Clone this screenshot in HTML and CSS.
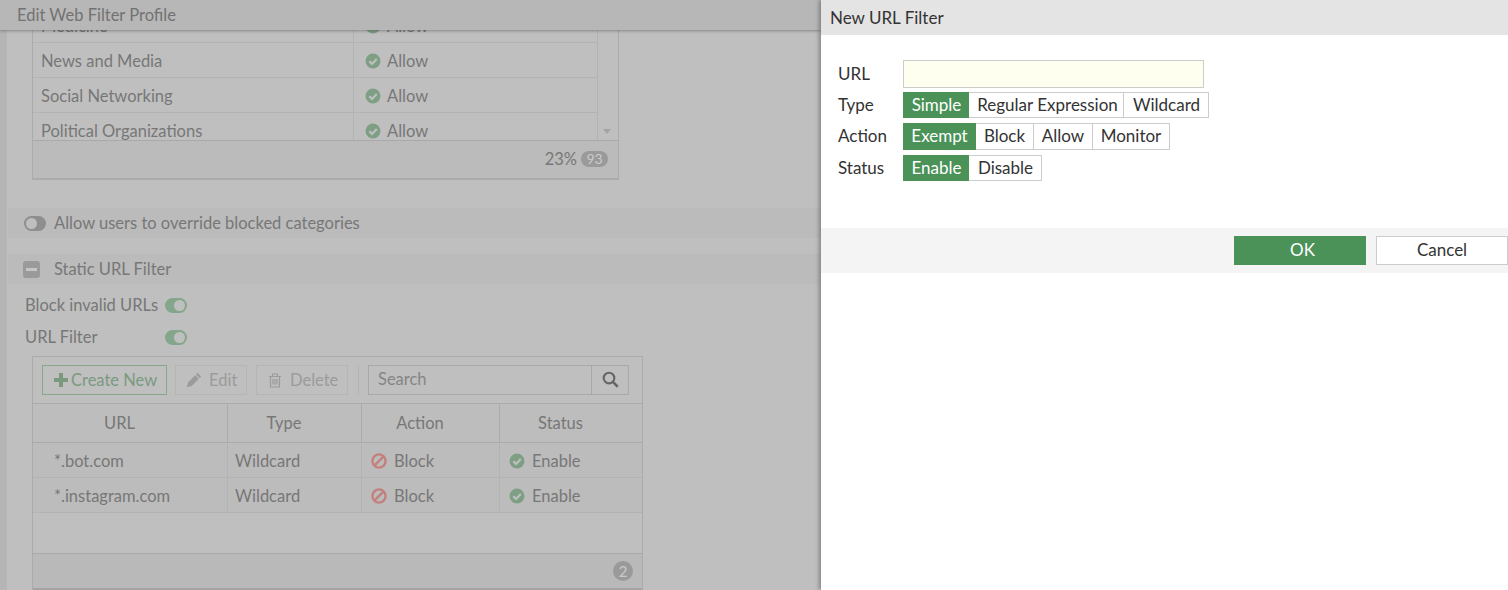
FILE: index.html
```html
<!DOCTYPE html>
<html lang="en">
<head>
<meta charset="utf-8">
<title>New URL Filter</title>
<link rel="stylesheet" href="styles.css">
</head>
<body>
<svg class="defs" width="0" height="0" aria-hidden="true">
  <symbol id="check" viewBox="0 0 16 16">
    <circle cx="8" cy="8" r="7.5" fill="currentColor"/>
    <path d="M4.3 8.2 7 10.9 11.8 6" fill="none" stroke="var(--tick)" stroke-width="2.2"/>
  </symbol>
  <symbol id="ban" viewBox="0 0 16 16">
    <circle cx="8" cy="8" r="6.6" fill="none" stroke="currentColor" stroke-width="2.4"/>
    <path d="M3.6 12.4 12.4 3.6" fill="none" stroke="currentColor" stroke-width="2.4"/>
  </symbol>
</svg>
<div class="screen">
  <section class="page">
    <header class="page-head">Edit Web Filter Profile</header>
    <div class="page-body">
      <div class="grid-one">
        <div class="grid-one-scroll">
          <div class="grid-one-rows">
            <div class="cat-row"><span class="cat-name">Medicine</span><span class="cat-action"><svg class="ico"><use href="#check"/></svg>Allow</span></div>
            <div class="cat-row"><span class="cat-name">News and Media</span><span class="cat-action"><svg class="ico"><use href="#check"/></svg>Allow</span></div>
            <div class="cat-row"><span class="cat-name">Social Networking</span><span class="cat-action"><svg class="ico"><use href="#check"/></svg>Allow</span></div>
            <div class="cat-row"><span class="cat-name">Political Organizations</span><span class="cat-action"><svg class="ico"><use href="#check"/></svg>Allow</span></div>
          </div>
          <div class="scroll-track"><span class="scroll-arrow"></span></div>
        </div>
        <div class="grid-one-foot">23%<span class="pill">93</span></div>
      </div>

      <div class="bar bar-first"><span class="toggle toggle-off"></span><span>Allow users to override blocked categories</span></div>
      <div class="bar bar-second"><span class="minus"></span><span>Static URL Filter</span></div>

      <div class="opt opt-first"><span class="opt-label">Block invalid URLs</span><span class="toggle toggle-on"></span></div>
      <div class="opt"><span class="opt-label">URL Filter</span><span class="toggle toggle-on"></span></div>

      <div class="grid-two">
        <div class="tools">
          <span class="tool tool-create">
            <svg class="tool-plus" viewBox="0 0 14 14"><path d="M5 0h4v5h5v4H9v5H5V9H0V5h5z" fill="currentColor"/></svg>Create New
          </span>
          <span class="tool tool-edit">
            <svg class="tool-ico" viewBox="0 0 16 16"><path d="M11.6.8 15.2 4.4 13.6 6 10 2.4zM9.2 3.2 12.8 6.8 5.6 14 .8 15.2 2 10.4z" fill="currentColor"/></svg>Edit
          </span>
          <span class="tool tool-del">
            <svg class="tool-ico" viewBox="0 0 16 16"><path d="M2 4.5h12M5.5 4.5V2h5v2.5M3.5 4.5V15h9V4.5M6 7v5.5M8 7v5.5M10 7v5.5" fill="none" stroke="currentColor" stroke-width="1.2"/></svg>Delete
          </span>
          <span class="tool-sep"></span>
          <span class="search">
            <span class="search-text">Search</span>
            <span class="search-btn"><svg class="search-ico" viewBox="0 0 16 16"><circle cx="6.6" cy="6.6" r="5" fill="none" stroke="currentColor" stroke-width="2"/><path d="M10.3 10.3 14.8 14.8" stroke="currentColor" stroke-width="2.4"/></svg></span>
          </span>
        </div>
        <div class="url-head">
          <span class="url-cell">URL</span><span class="url-cell">Type</span><span class="url-cell">Action</span><span class="url-cell">Status</span>
        </div>
        <div class="url-row">
          <span class="url-td url-name">*.bot.com</span><span class="url-td">Wildcard</span>
          <span class="url-td"><svg class="ico ico-ban"><use href="#ban"/></svg>Block</span>
          <span class="url-td"><svg class="ico"><use href="#check"/></svg>Enable</span>
        </div>
        <div class="url-row">
          <span class="url-td url-name">*.instagram.com</span><span class="url-td">Wildcard</span>
          <span class="url-td"><svg class="ico ico-ban"><use href="#ban"/></svg>Block</span>
          <span class="url-td"><svg class="ico"><use href="#check"/></svg>Enable</span>
        </div>
        <div class="url-empty"></div>
        <div class="url-foot"><span class="pill pill-round">2</span></div>
      </div>
    </div>
  </section>

  <aside class="panel">
    <header class="panel-head">New URL Filter</header>
    <div class="form">
      <div class="field field-url"><span class="field-label">URL</span><span class="url-input"></span></div>
      <div class="field field-type"><span class="field-label">Type</span>
        <span class="seg"><span class="seg-item seg-on seg-simple">Simple</span><span class="seg-item seg-regex">Regular Expression</span><span class="seg-item seg-wild">Wildcard</span></span></div>
      <div class="field field-action"><span class="field-label">Action</span>
        <span class="seg"><span class="seg-item seg-on seg-exempt">Exempt</span><span class="seg-item seg-block">Block</span><span class="seg-item seg-allow">Allow</span><span class="seg-item seg-monitor">Monitor</span></span></div>
      <div class="field field-status"><span class="field-label">Status</span>
        <span class="seg"><span class="seg-item seg-on seg-simple">Enable</span><span class="seg-item seg-disable">Disable</span></span></div>
    </div>
    <footer class="panel-foot">
      <span class="btn btn-ok">OK</span><span class="btn btn-cancel">Cancel</span>
    </footer>
  </aside>
</div>
</body>
</html>
```

FILE: styles.css
```css
* { box-sizing: border-box; }
html, body { margin: 0; height: 100%; overflow: hidden; }
body {
  font-family: Lato, "Open Sans", sans-serif;
  font-size: 17px;
  color: #333;
  background: #fff;
  --tick: #bfbfbf;
}
.defs { position: absolute; }
.screen { display: flex; width: 1508px; height: 590px; }

/* dimmed page */
.page {
  width: 821px;
  height: 590px;
  flex: none;
  display: flex;
  flex-direction: column;
  overflow: hidden;
  background: #bfbfbf;
  color: #777;
  font-size: 16.5px;
}
.page-head {
  position: relative;
  z-index: 2;
  flex: none;
  height: 30px;
  padding-left: 17px;
  line-height: 30px;
  background: #b7b7b7;
  color: #727272;
  box-shadow: 0 1px 3px rgba(0,0,0,.3);
}
.page-body {
  flex: 1;
  min-height: 0;
  border-left: 7px solid #b5b5b5;
  padding-left: 1px;
}

.ico { width: 16px; height: 16px; flex: none; margin-right: 7px; color: #7f9f85; }
.ico-ban { color: #c4807c; }

.grid-one {
  width: 587px;
  margin-left: 24px;
  border: 1px solid #ababab;
  border-top: 0;
  border-bottom-width: 2px;
}
.grid-one-scroll { display: flex; height: 110px; overflow: hidden; }
.grid-one-rows { width: 565px; margin-top: -22px; }
.cat-row {
  display: grid;
  grid-template-columns: 320px 1fr;
  height: 35px;
  align-items: center;
  border-bottom: 1px solid #b3b3b3;
  border-right: 1px solid #b3b3b3;
}
.cat-name { display: flex; align-items: center; padding: 1px 0 0 8px; height: 100%; }
.cat-action { display: flex; align-items: center; padding: 1px 0 0 11px; height: 100%; border-left: 1px solid #b3b3b3; }
.cat-action .ico { margin-right: 6px; }
.scroll-track { flex: 1; position: relative; }
.scroll-arrow {
  position: absolute;
  left: 5px;
  bottom: 6px;
  border: 4px solid transparent;
  border-top: 5px solid #a3a3a3;
  border-bottom: 0;
}
.grid-one-foot {
  height: 38px;
  display: flex;
  align-items: center;
  justify-content: flex-end;
  padding-right: 10px;
  padding-bottom: 1px;
  border-top: 1px solid #a9a9a9;
  background: #bbb;
}
.pill {
  min-width: 27px;
  height: 16px;
  margin-left: 4px;
  border-radius: 8px;
  background: #9a9a9a;
  color: #cacaca;
  font-size: 14px;
  line-height: 16px;
  text-align: center;
}
.pill-round { min-width: 20px; height: 20px; border-radius: 10px; line-height: 20px; margin: 0; font-size: 15px; }

.bar {
  display: flex;
  align-items: center;
  height: 30px;
  background: #bbb;
}
.bar-first { margin-top: 28px; padding-left: 16px; }
.bar-first .toggle { margin-right: 8px; }
.bar-second { margin-top: 16px; padding-left: 15px; }
.minus {
  position: relative;
  width: 17px;
  height: 17px;
  margin-right: 14px;
  border-radius: 3px;
  background: #9a9a9a;
}
.minus::after {
  content: "";
  position: absolute;
  left: 3px;
  right: 3px;
  top: 7px;
  height: 3px;
  background: #c6c6c6;
}
.toggle {
  position: relative;
  display: block;
  flex: none;
  width: 22px;
  height: 15px;
  border-radius: 8px;
}
.toggle::after {
  content: "";
  position: absolute;
  top: 2px;
  width: 11px;
  height: 11px;
  border-radius: 50%;
  background: #bfbfbf;
}
.toggle-on { background: #84a68a; }
.toggle-on::after { right: 2px; }
.toggle-off { background: #8e8e8e; }
.toggle-off::after { left: 2px; }

.opt { display: flex; align-items: center; height: 32px; padding-left: 17px; }
.opt-first { margin-top: 5px; }
.opt-label { width: 140px; }

.grid-two {
  width: 611px;
  margin-top: 3px;
  margin-left: 24px;
  border: 1px solid #ababab;
  border-bottom: 0;
}
.tools {
  display: flex;
  align-items: center;
  height: 47px;
  padding: 0 13px 1px 9px;
  border-bottom: 1px solid #ababab;
}
.tool {
  display: flex;
  align-items: center;
  height: 30px;
  border: 1px solid #b5b5b5;
  color: #9b9b9b;
}
.tool-create {
  width: 125px;
  padding-left: 11px;
  border-color: #85a78b;
  color: #7a9a80;
}
.tool-plus { width: 14px; height: 14px; margin-right: 3px; }
.tool-edit { width: 72px; margin-left: 8px; padding-left: 10px; }
.tool-del { width: 92px; margin-left: 9px; padding-left: 10px; }
.tool-ico { width: 16px; height: 16px; margin-right: 7px; }
.tool-sep { width: 1px; height: 30px; margin: 0 9px 0 10px; background: #b3b3b3; }
.search {
  flex: 1;
  display: flex;
  height: 30px;
  border: 1px solid #a9a9a9;
}
.search-text { flex: 1; padding-left: 9px; line-height: 26px; color: #858585; }
.search-btn {
  width: 37px;
  display: flex;
  align-items: center;
  justify-content: center;
  border-left: 1px solid #a9a9a9;
  color: #666;
}
.search-ico { width: 17px; height: 17px; }

.url-head, .url-row {
  display: grid;
  grid-template-columns: 194px 134px 138px 1fr;
}
.url-head { height: 39px; border-bottom: 1px solid #ababab; background: #bdbdbd; }
.url-cell {
  display: flex;
  align-items: center;
  justify-content: center;
  padding-right: 21px;
  border-left: 1px solid #ababab;
}
.url-cell:first-child { border-left: 0; }
.url-row { height: 35px; border-bottom: 1px solid #b3b3b3; background: #bcbcbc; }
.url-td {
  display: flex;
  align-items: center;
  padding: 2px 0 0 7px;
  border-left: 1px solid #b3b3b3;
}
.url-td:first-child { border-left: 0; }
.url-td .ico { margin-left: 2px; margin-right: 7px; }
.url-name { padding-left: 21px; }
.url-empty { height: 40px; }
.url-foot {
  display: flex;
  align-items: center;
  justify-content: flex-end;
  height: 37px;
  padding-right: 9px;
  border-top: 1px solid #a9a9a9;
  border-bottom: 2px solid #a3a3a3;
  background: #b9b9b9;
}

/* slide-in panel */
.panel {
  position: relative;
  z-index: 3;
  flex: 1;
  background: #fff;
  box-shadow: -2px 0 4px rgba(0,0,0,.3);
}
.panel-head {
  height: 35px;
  padding-left: 9px;
  line-height: 35px;
  background: #e4e4e4;
}
.form { height: 193px; padding: 25px 0 0 17px; }
.field { display: flex; align-items: center; }
.field-label { width: 65px; flex: none; padding-bottom: 2px; }
.field-url { height: 28px; }
.field-type { height: 26px; margin-top: 4px; }
.field-action { height: 27px; margin-top: 5px; }
.field-status { height: 26px; margin-top: 5px; }
.url-input {
  width: 301px;
  height: 28px;
  border: 1px solid #ccc;
  background: #fffff0;
}
.seg { display: flex; height: 100%; }
.seg-item {
  display: flex;
  align-items: center;
  justify-content: center;
  padding-bottom: 2px;
  border: 1px solid #ccc;
  border-left: 0;
}
.seg-on { border: 0; background: #4a9257; color: #fff; }
.seg-simple { width: 66px; padding-left: 1px; }
.seg-regex { width: 155px; padding-left: 3px; }
.seg-wild { width: 85px; padding-left: 1px; }
.seg-exempt { width: 73px; }
.seg-block { width: 58px; }
.seg-allow { width: 59px; }
.seg-monitor { width: 77px; }
.seg-disable { width: 73px; padding-left: 1px; }
.panel-foot {
  display: flex;
  align-items: center;
  justify-content: flex-end;
  gap: 10px;
  height: 45px;
  background: #f4f4f4;
}
.btn {
  display: flex;
  align-items: center;
  justify-content: center;
  width: 132px;
  height: 29px;
  padding-bottom: 2px;
}
.btn-ok { padding-left: 5px; background: #4a9257; color: #fff; }
.btn-cancel { background: #fff; border: 1px solid #ccc; }
```
